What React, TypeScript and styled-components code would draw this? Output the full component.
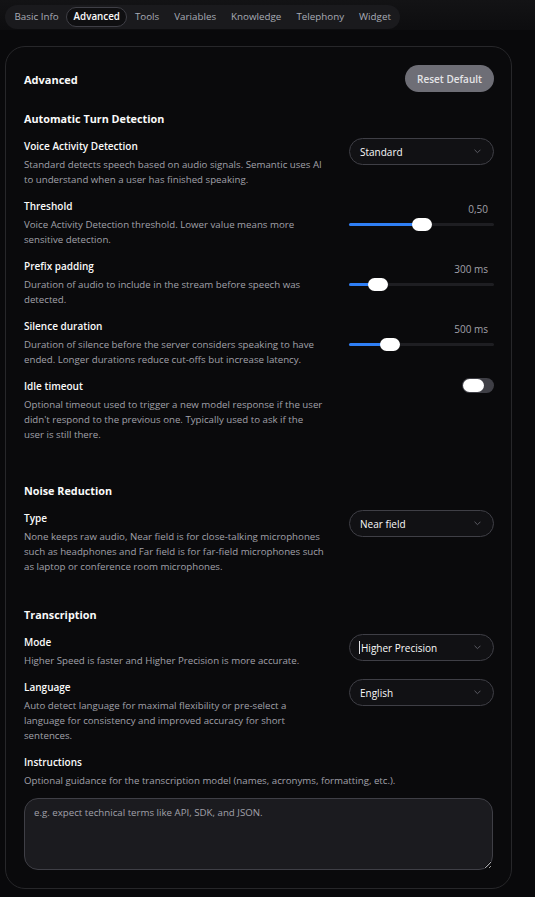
import React from "react";
import styled, { createGlobalStyle } from "styled-components";

const Global = createGlobalStyle`
  html, body { margin: 0; padding: 0; background: #09090b; }
  body {
    font-family: "Open Sans", "Noto Sans", sans-serif;
    color: #fafafa;
    -webkit-font-smoothing: antialiased;
  }
  * { box-sizing: border-box; }
`;

const Page = styled.div`
  width: 535px;
  min-height: 897px;
  display: flex;
  flex-direction: column;
  background: #09090b;
`;

const TopBar = styled.header`
  height: 30px;
  padding: 3px 0 0 5px;
  background: linear-gradient(#131315, #0d0d0f);
`;

const Tabs = styled.nav`
  display: inline-flex;
  align-items: center;
  height: 24px;
  padding: 2px;
  border-radius: 12px;
  background: #1a1a1d;
`;

const Tab = styled.span<{ $active?: boolean }>`
  display: flex;
  align-items: center;
  height: 20px;
  padding: 0 6.5px;
  border-radius: 10px;
  border: 1px solid ${(p) => (p.$active ? "#3f3f46" : "transparent")};
  background: ${(p) => (p.$active ? "#0f0f11" : "transparent")};
  color: ${(p) => (p.$active ? "#fafafa" : "#a8acb6")};
  font-size: 9.8px;
  font-weight: ${(p) => (p.$active ? 600 : 400)};
  white-space: nowrap;
`;

const Card = styled.section`
  margin: 16px 0 0 5px;
  width: 507px;
  border: 1px solid #27272a;
  border-radius: 20px;
  background: #0a0a0c;
  padding: 18px 18px 18px 18px;
  display: flex;
  flex-direction: column;
`;

const CardHeader = styled.div`
  display: flex;
  align-items: center;
  justify-content: space-between;
  height: 27px;
`;

const Title = styled.h2`
  margin: 0;
  font-size: 11px;
  line-height: 16px;
  font-weight: 700;
  padding-top: 2px;
`;

const ResetButton = styled.button`
  height: 27px;
  margin-right: -1px;
  padding: 0 12px;
  border: none;
  border-radius: 999px;
  background: #6e6e76;
  color: #e4e4e7;
  font-family: inherit;
  font-size: 10px;
  font-weight: 600;
`;

const Sections = styled.div`
  margin-top: 19px;
  display: flex;
  flex-direction: column;
  gap: 33px;
`;

const Section = styled.div`
  display: flex;
  flex-direction: column;
  gap: 11px;
`;

const Heading = styled.h3`
  margin: 0;
  font-size: 10.8px;
  line-height: 16px;
  font-weight: 700;
`;

const Row = styled.div<{ $extra?: number }>`
  display: grid;
  grid-template-columns: 307px 145px;
  column-gap: 18px;
  align-items: start;
  margin-bottom: ${(p) => p.$extra ?? 0}px;
`;

const Field = styled.div`
  display: flex;
  flex-direction: column;
  gap: 3px;
`;

const Label = styled.div`
  font-size: 10px;
  line-height: 16px;
  font-weight: 600;
  color: #fafafa;
`;

const Desc = styled.div`
  font-size: 9.7px;
  line-height: 15px;
  color: #a1a1aa;
  white-space: nowrap;
`;

const SelectBox = styled.div<{ $caret?: boolean }>`
  height: 27px;
  display: flex;
  align-items: center;
  justify-content: space-between;
  padding: 0 12px 0 ${(p) => (p.$caret ? 9 : 10)}px;
  border: 1px solid #3f3f46;
  border-radius: 999px;
  background: #111114;
  color: #fafafa;
  font-size: 10px;
  font-weight: 500;
`;

const SelectValue = styled.span`
  display: flex;
  align-items: center;
  gap: 1px;
`;

const Caret = styled.span`
  width: 1px;
  height: 13px;
  background: #e4e4e7;
`;

const SliderControl = styled.div`
  display: flex;
  flex-direction: column;
  padding-top: 4px;
`;

const SliderValue = styled.div`
  text-align: right;
  padding-right: 6px;
  font-size: 10px;
  line-height: 14px;
  color: #a1a1aa;
`;

const Track = styled.div`
  position: relative;
  height: 17px;
  display: flex;
  align-items: center;
`;

const Rail = styled.div`
  width: 100%;
  height: 3px;
  border-radius: 2px;
  background: #1e1e22;
`;

const Fill = styled.div`
  position: absolute;
  left: 0;
  top: 7px;
  height: 3px;
  border-radius: 2px;
  background: #2f7ff6;
`;

const Thumb = styled.div`
  position: absolute;
  top: 2px;
  width: 20px;
  height: 13px;
  border-radius: 7px;
  background: #ffffff;
`;

const Toggle = styled.div`
  justify-self: end;
  width: 32px;
  height: 15px;
  padding: 1px;
  border-radius: 8px;
  background: #3f3f46;
  display: flex;
`;

const Knob = styled.div`
  width: 21px;
  height: 13px;
  border-radius: 7px;
  background: #ffffff;
`;

const Block = styled.div`
  display: flex;
  flex-direction: column;
`;

const BlockDesc = styled(Desc)`
  margin-top: 3px;
`;

const TextArea = styled.textarea`
  margin-top: 10px;
  width: 100%;
  height: 72px;
  padding: 6px 9px;
  border: 1px solid #3f3f46;
  border-radius: 14px;
  background: #1b1b1f;
  color: #fafafa;
  font-family: inherit;
  font-size: 9.7px;
  line-height: 15px;
  resize: vertical;
  outline: none;
  &::placeholder { color: #a1a1aa; }
`;

const Chevron = () => (
  <svg width="7" height="5" viewBox="0 0 7 5" fill="none">
    <path d="M0.8 1 L3.5 3.7 L6.2 1" stroke="#5b5b63" strokeWidth="1" strokeLinecap="round" strokeLinejoin="round" />
  </svg>
);

const Lines = ({ lines }: { lines: string[] }) => (
  <>
    {lines.map((l, i) => (
      <React.Fragment key={i}>
        {l}
        {i < lines.length - 1 && <br />}
      </React.Fragment>
    ))}
  </>
);

const Select = ({ value, caret }: { value: string; caret?: boolean }) => (
  <SelectBox $caret={caret}>
    <SelectValue>
      {caret && <Caret />}
      {value}
    </SelectValue>
    <Chevron />
  </SelectBox>
);

const Slider = ({ value, fraction }: { value: string; fraction: number }) => {
  const pos = 125 * fraction;
  return (
    <SliderControl>
      <SliderValue>{value}</SliderValue>
      <Track>
        <Rail />
        <Fill style={{ width: pos + 10 }} />
        <Thumb style={{ left: pos }} />
      </Track>
    </SliderControl>
  );
};

const FieldText = ({ label, lines }: { label: string; lines: string[] }) => (
  <Field>
    <Label>{label}</Label>
    <Desc>
      <Lines lines={lines} />
    </Desc>
  </Field>
);

const tabs = ["Basic Info", "Advanced", "Tools", "Variables", "Knowledge", "Telephony", "Widget"];

export default function App() {
  return (
    <Page>
      <Global />
      <TopBar>
        <Tabs>
          {tabs.map((t) => (
            <Tab key={t} $active={t === "Advanced"}>
              {t}
            </Tab>
          ))}
        </Tabs>
      </TopBar>
      <Card>
        <CardHeader>
          <Title>Advanced</Title>
          <ResetButton>Reset Default</ResetButton>
        </CardHeader>
        <Sections>
          <Section>
            <Heading>Automatic Turn Detection</Heading>
            <Row>
              <FieldText
                label="Voice Activity Detection"
                lines={[
                  "Standard detects speech based on audio signals. Semantic uses AI",
                  "to understand when a user has finished speaking.",
                ]}
              />
              <Select value="Standard" />
            </Row>
            <Row>
              <FieldText
                label="Threshold"
                lines={["Voice Activity Detection threshold. Lower value means more", "sensitive detection."]}
              />
              <Slider value="0,50" fraction={0.5} />
            </Row>
            <Row>
              <FieldText
                label="Prefix padding"
                lines={["Duration of audio to include in the stream before speech was", "detected."]}
              />
              <Slider value="300 ms" fraction={0.15} />
            </Row>
            <Row>
              <FieldText
                label="Silence duration"
                lines={[
                  "Duration of silence before the server considers speaking to have",
                  "ended. Longer durations reduce cut-offs but increase latency.",
                ]}
              />
              <Slider value="500 ms" fraction={0.25} />
            </Row>
            <Row $extra={8}>
              <FieldText
                label="Idle timeout"
                lines={[
                  "Optional timeout used to trigger a new model response if the user",
                  "didn't respond to the previous one. Typically used to ask if the",
                  "user is still there.",
                ]}
              />
              <Toggle>
                <Knob />
              </Toggle>
            </Row>
          </Section>
          <Section>
            <Heading>Noise Reduction</Heading>
            <Row>
              <FieldText
                label="Type"
                lines={[
                  "None keeps raw audio, Near field is for close-talking microphones",
                  "such as headphones and Far field is for far-field microphones such",
                  "as laptop or conference room microphones.",
                ]}
              />
              <Select value="Near field" />
            </Row>
          </Section>
          <Section>
            <Heading>Transcription</Heading>
            <Row>
              <FieldText label="Mode" lines={["Higher Speed is faster and Higher Precision is more accurate."]} />
              <Select value="Higher Precision" caret />
            </Row>
            <Row>
              <FieldText
                label="Language"
                lines={[
                  "Auto detect language for maximal flexibility or pre-select a",
                  "language for consistency and improved accuracy for short",
                  "sentences.",
                ]}
              />
              <Select value="English" />
            </Row>
            <Block>
              <Label>Instructions</Label>
              <BlockDesc>Optional guidance for the transcription model (names, acronyms, formatting, etc.).</BlockDesc>
              <TextArea placeholder="e.g. expect technical terms like API, SDK, and JSON." />
            </Block>
          </Section>
        </Sections>
      </Card>
    </Page>
  );
}
